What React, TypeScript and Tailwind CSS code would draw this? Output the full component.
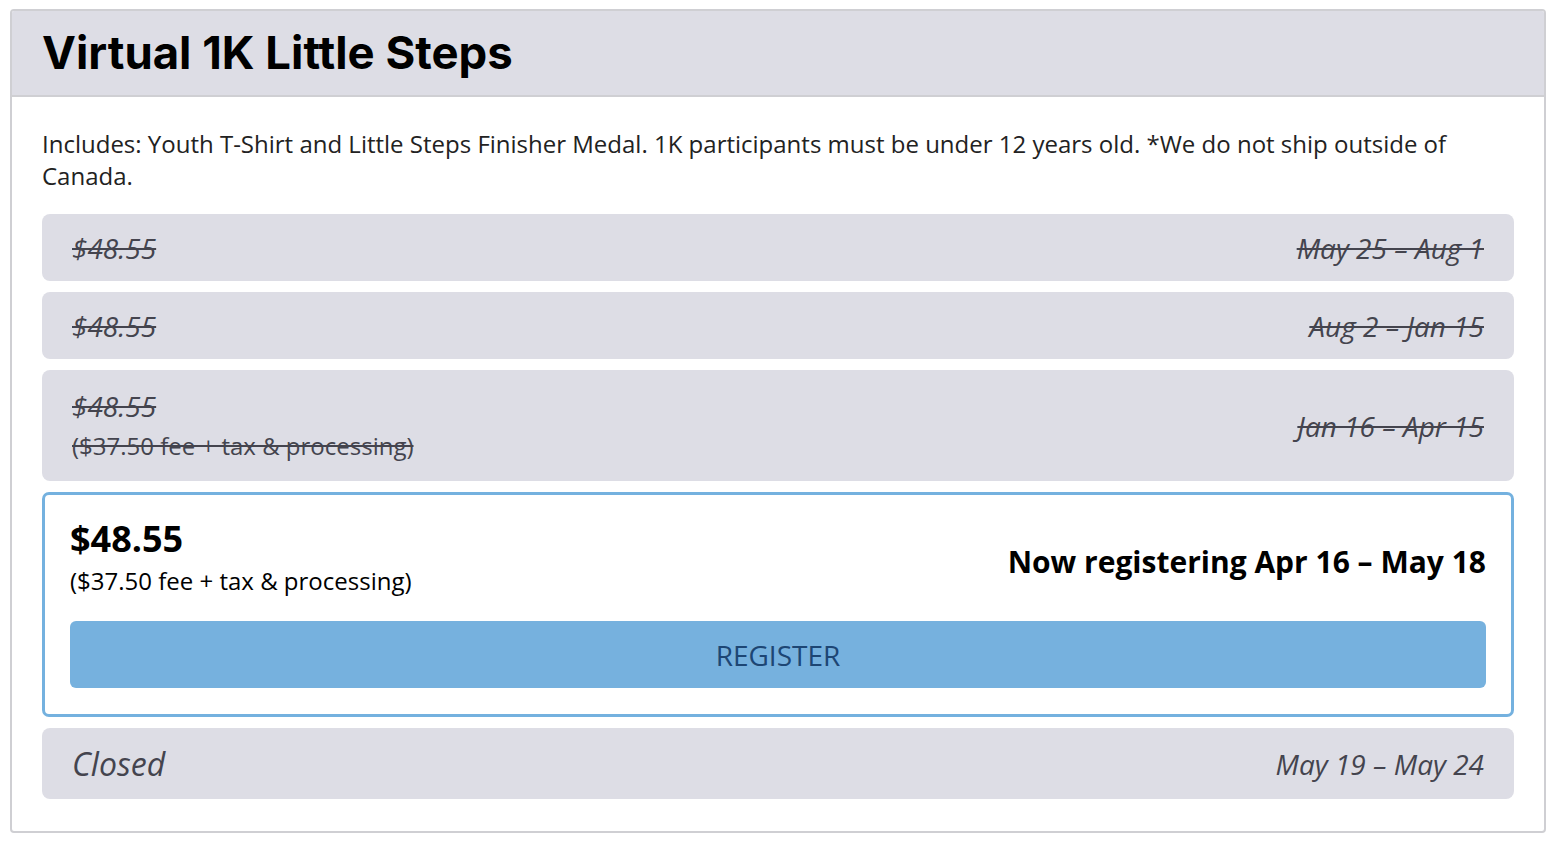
const past = [
  { price: "$48.55", dates: "May 25 – Aug 1" },
  { price: "$48.55", dates: "Aug 2 – Jan 15" },
  { price: "$48.55", dates: "Jan 16 – Apr 15", fee: "($37.50 fee + tax & processing)" },
];

export default function App() {
  return (
    <div className="bg-white min-h-screen pt-[9px] pl-[10px] pr-[14px] font-['Open_Sans',sans-serif]">
      <div className="border-2 border-[#cfcfd3] rounded-[4px] overflow-hidden">
        {/* heading */}
        <div className="bg-[#dddde5] border-b-2 border-[#cfcfd3] h-[86px] flex items-center px-[30px]">
          <h1 className="font-['Inter',sans-serif] font-bold text-[45.5px] text-black">
            Virtual 1K Little Steps
          </h1>
        </div>

        <div className="px-[30px] pt-[31px] pb-[32px]">
          <p className="text-[24px] leading-[32px] text-[#222]">
            Includes: Youth T-Shirt and Little Steps Finisher Medal. 1K participants must be under 12 years old. *We do not ship outside of Canada.
          </p>

          <div className="mt-[22px] flex flex-col gap-[11px]">
            {past.map((p, i) => (
              <div
                key={i}
                className={`bg-[#dddde5] rounded-[8px] flex items-center justify-between px-[30px] italic text-[#44444e] line-through text-[28px] ${p.fee ? "h-[111px]" : "h-[67px]"}`}
              >
                <div className="flex flex-col">
                  <span className="leading-[38px]">{p.price}</span>
                  {p.fee && <span className="not-italic text-[24px] leading-[38px] mt-[2px]">{p.fee}</span>}
                </div>
                <span>{p.dates}</span>
              </div>
            ))}

            {/* active period */}
            <div className="border-[3px] border-[#74b1df] rounded-[7px] bg-white px-[25px] pt-[21px] pb-[26px]">
              <div className="flex items-center justify-between">
                <div className="flex flex-col">
                  <span className="font-bold text-[36px] leading-[46px] text-black">$48.55</span>
                  <span className="text-[24px] leading-[38px] text-black">($37.50 fee + tax & processing)</span>
                </div>
                <span className="font-bold text-[30px] text-black mt-[6px]">Now registering Apr 16 – May 18</span>
              </div>
              <button className="mt-[21px] w-full h-[67px] bg-[#76b1de] rounded-[6px] text-[28px] text-[#1d4674]">
                REGISTER
              </button>
            </div>

            <div className="bg-[#dddde5] rounded-[8px] h-[71px] flex items-center justify-between px-[30px] italic text-[#44444e]">
              <span className="text-[32px]">Closed</span>
              <span className="text-[28px]">May 19 – May 24</span>
            </div>
          </div>
        </div>
      </div>
    </div>
  );
}
